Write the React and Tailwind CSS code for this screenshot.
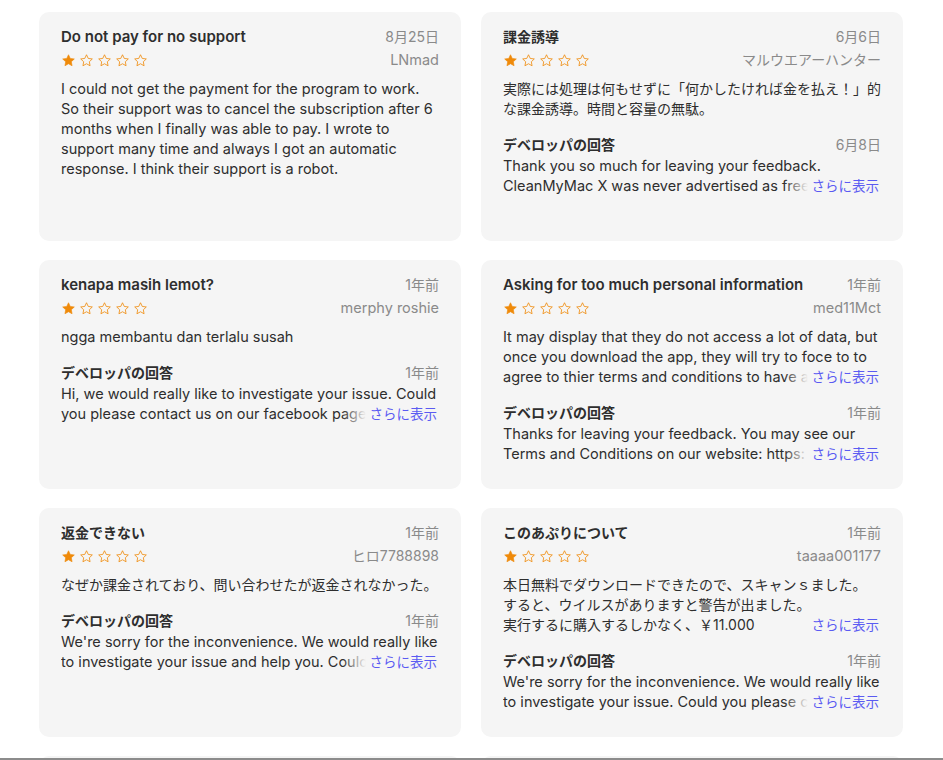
import React from "react";

const reviews = [
    {
        title: "Do not pay for no support",
        date: "8月25日",
        author: "LNmad",
        body: "I could not get the payment for the program to work. So their support was to cancel the subscription after 6 months when I finally was able to pay. I wrote to support many time and always I got an automatic response.  I think their support is a robot.",
    },
    {
        title: "課金誘導",
        date: "6月6日",
        author: "マルウエアーハンター",
        body: "実際には処理は何もせずに「何かしたければ金を払え！」的な課金誘導。時間と容量の無駄。",
        reply: {
            date: "6月8日",
            text: "Thank you so much for leaving your feedback. CleanMyMac X was never advertised as free software, we always offer a free trial version.",
        },
    },
    {
        title: "kenapa masih lemot?",
        date: "1年前",
        author: "merphy roshie",
        body: "ngga membantu dan terlalu susah",
        reply: {
            date: "1年前",
            text: "Hi, we would really like to investigate your issue. Could you please contact us on our facebook page so we can help you?",
        },
    },
    {
        title: "Asking for too much personal information",
        date: "1年前",
        author: "med11Mct",
        body: "It may display that they do not access a lot of data, but once you download the app, they will try to foce to to agree to thier terms and conditions to have access to everything.",
        more: true,
        reply: {
            date: "1年前",
            text: "Thanks for leaving your feedback. You may see our Terms and Conditions on our website: https:\u200B//macpaw.com/policy",
        },
    },
    {
        title: "返金できない",
        date: "1年前",
        author: "ヒロ7788898",
        body: "なぜか課金されており、問い合わせたが返金されなかった。",
        reply: {
            date: "1年前",
            text: "We're sorry for the inconvenience. We would really like to investigate your issue and help you. Could you please contact us?",
        },
    },
    {
        title: "このあぷりについて",
        date: "1年前",
        author: "taaaa001177",
        body: "本日無料でダウンロードできたので、スキャンｓました。\nすると、ウイルスがありますと警告が出ました。\n実行するに購入するしかなく、￥11.000\nこれは詐欺ですか？",
        more: true,
        plain: true,
        reply: {
            date: "1年前",
            text: "We're sorry for the inconvenience. We would really like to investigate your issue. Could you please contact us?",
        },
    },
    { title: "Not working", date: "1年前", author: "user", body: "" },
    { title: "Too expensive", date: "1年前", author: "user", body: "" },
];

// latin text renders a touch larger than the japanese text
const isJa = (s) => /[\u3040-\u30ff\u4e00-\u9fff]/.test(s);

const Star = ({ filled }) => (
    <svg viewBox="0 0 24 24" className="size-[15px]" fill={filled ? "#ef8a0a" : "none"} stroke="#ef8a0a" strokeWidth={filled ? 1 : 1.3} strokeLinejoin="round">
        <path d="M12 2.8l2.8 5.9 6.5.8-4.8 4.5 1.2 6.4L12 17.2l-5.7 3.2 1.2-6.4-4.8-4.5 6.5-.8z" />
    </svg>
);

const More = ({ solid }) => (
    <span className="absolute right-0 bottom-0 flex">
        {!solid && <span className="w-6 bg-linear-to-r from-transparent to-[#f5f5f5]" />}
        <span className="bg-[#f5f5f5] pl-1 pr-[2px] text-[13.5px] text-[#5b5bf2] cursor-pointer">さらに表示</span>
    </span>
);

const Clamped = ({ text, lines, more, plain }) => {
    const clamp = lines === 3 ? "max-h-[60px] overflow-hidden" : lines === 2 ? "max-h-[40px] overflow-hidden" : "";
    const size = isJa(text) ? "text-[14px]" : "text-[14.5px]";
    return (
        <div className="relative">
            <p className={`whitespace-pre-line ${size} ${clamp}`}>{text}</p>
            {more && <More solid={plain} />}
        </div>
    );
};

const ReviewCard = ({ review }) => (
    <div className="h-[229px] rounded-[10px] bg-[#f5f5f5] px-[22px] pt-[15px] text-[14px] leading-5 text-[#2e2e2e]">
        <div className="flex justify-between gap-4">
            <h3 className={`font-semibold truncate ${isJa(review.title) ? "text-[14px]" : "text-[15px]"}`}>{review.title}</h3>
            <span className="shrink-0 text-[#8a8a8a]">{review.date}</span>
        </div>
        <div className="flex justify-between items-center mt-[3px]">
            <div className="flex gap-[3px]">
                {[0, 1, 2, 3, 4].map((i) => <Star key={i} filled={i === 0} />)}
            </div>
            <span className={`text-[#8a8a8a] ${isJa(review.author) ? "text-[14px]" : "text-[14.5px]"}`}>{review.author}</span>
        </div>
        {review.body && (
            <div className="mt-[9px]">
                <Clamped text={review.body} lines={review.reply ? 3 : 0} more={review.more} plain={review.plain} />
            </div>
        )}
        {review.reply && (
            <div className="mt-4">
                <div className="flex justify-between">
                    <span className="font-semibold">デベロッパの回答</span>
                    <span className="text-[#8a8a8a]">{review.reply.date}</span>
                </div>
                <div className="mt-[1px]">
                    <Clamped text={review.reply.text} lines={2} more />
                </div>
            </div>
        )}
    </div>
);

const App = () => {
    return (
        <div className="h-[760px] overflow-hidden bg-white border-b-2 border-[#8c8c8c] font-['Inter','Noto_Sans_CJK_JP',sans-serif]">
            <div className="grid grid-cols-2 gap-x-5 gap-y-[19px] pt-3 pl-[39px] pr-[40px]">
                {reviews.map((r, i) => <ReviewCard key={i} review={r} />)}
            </div>
        </div>
    );
};

export default App;
